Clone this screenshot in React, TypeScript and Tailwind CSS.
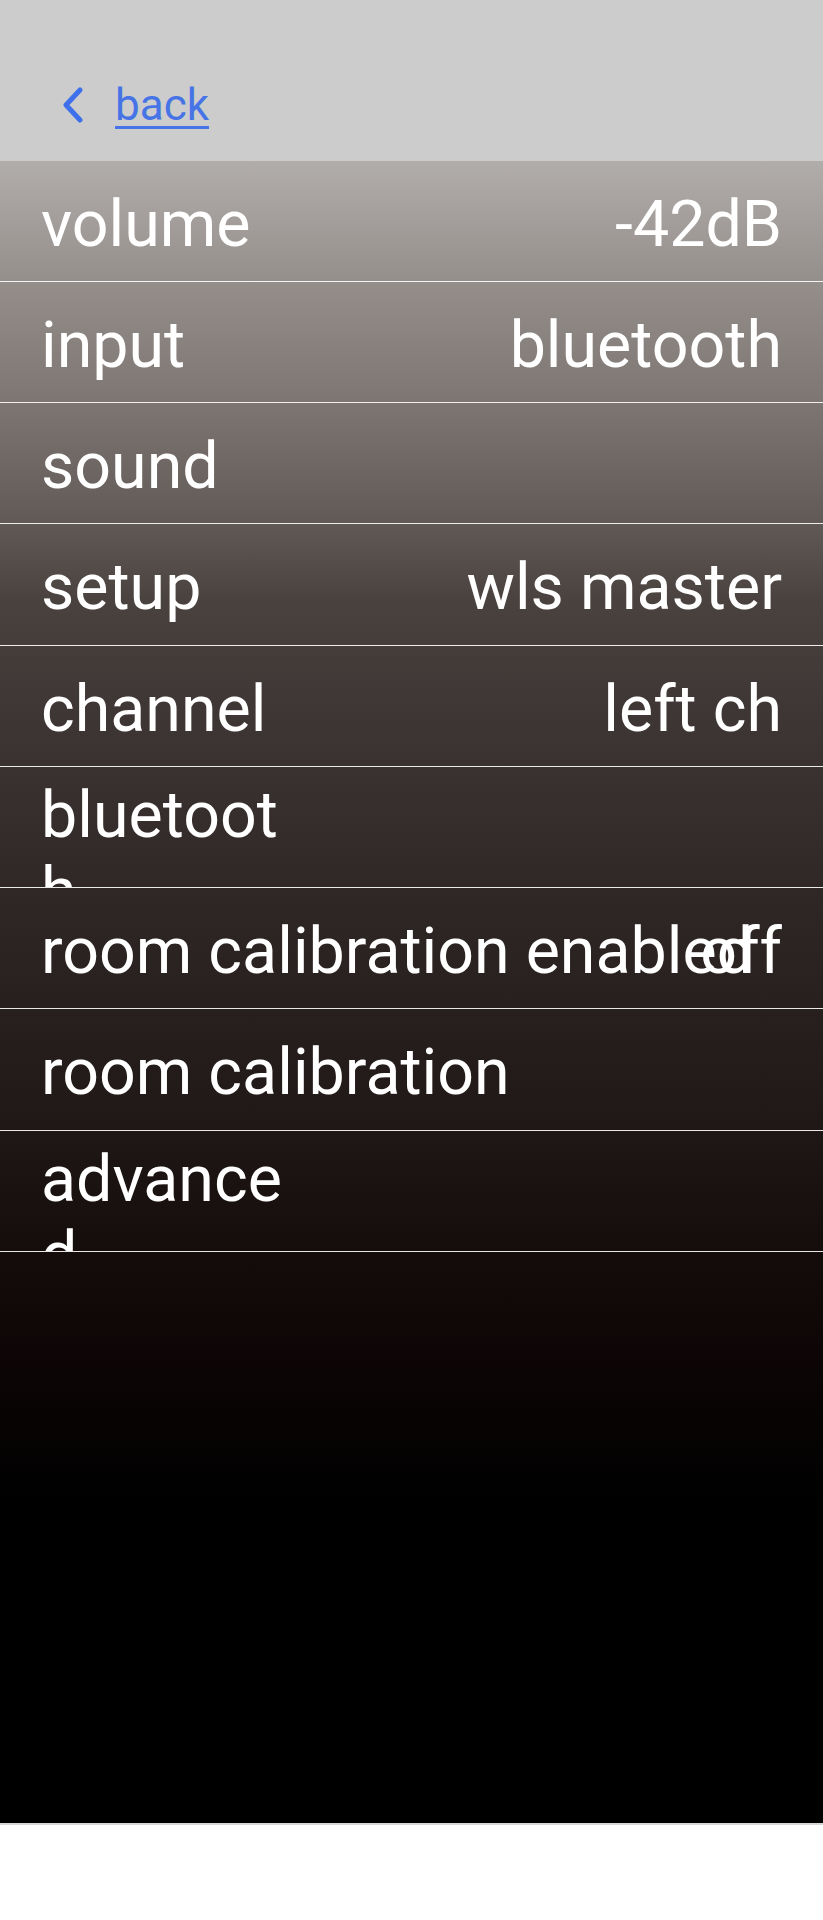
import React from 'react';

type Row = {
    label: string;
    value?: string;
    wrap?: boolean;
};

const rows: Row[] = [
    { label: 'volume', value: '-42dB' },
    { label: 'input', value: 'bluetooth' },
    { label: 'sound' },
    { label: 'setup', value: 'wls master' },
    { label: 'channel', value: 'left ch' },
    { label: 'bluetooth', wrap: true },
    { label: 'room calibration enabled', value: 'off' },
    { label: 'room calibration' },
    { label: 'advanced', wrap: true },
];

function ChevronLeft() {
    return (
        <svg width="24" height="36" viewBox="0 0 24 36" className="shrink-0 mt-[8px]">
            <polyline
                points="19,3 5,18 19,33"
                fill="none"
                stroke="#3f70ec"
                strokeWidth="5"
                strokeLinecap="round"
                strokeLinejoin="round"
            />
        </svg>
    );
}

function MenuRow({ row }: { row: Row }) {
    return (
        <div
            className={`h-[121.25px] overflow-hidden border-b border-white/90 px-[41px] ${row.wrap ? 'pt-[10px]' : 'pt-[25px]'}`}
        >
            {/* label and value share one cell so a long label runs under the value */}
            <div className="grid text-[64.5px] leading-[76px] text-white">
                <span
                    className={`col-start-1 row-start-1 justify-self-start ${row.wrap ? 'w-[260px] break-all' : 'whitespace-nowrap'}`}
                >
                    {row.label}
                </span>
                {row.value && (
                    <span className="col-start-1 row-start-1 justify-self-end whitespace-nowrap">
                        {row.value}
                    </span>
                )}
            </div>
        </div>
    );
}

export default function App() {
    return (
        <div className="w-[823px] bg-white font-['Roboto','Noto_Sans',sans-serif]">
            <div className="flex h-[1825px] flex-col border-b-2 border-[#d6d6d6]">
                {/* Header */}
                <div className="flex h-[160.5px] shrink-0 items-start gap-[30px] bg-[#cccccc] pl-[61px] pt-[79px]">
                    <ChevronLeft />
                    <a
                        href="#"
                        className="text-[44px] leading-[52px] text-[#4674e6] underline decoration-[3px] underline-offset-[6px]"
                    >
                        back
                    </a>
                </div>

                {/* Menu list */}
                <div className="flex-1 bg-[linear-gradient(180deg,#b1adaa_0%,#958f8c_7.2%,#7d7673_14.4%,#615a56_21.6%,#4a423f_26.4%,#403836_32.1%,#2f2725_44.4%,#221a18_56.4%,#150d0b_65.5%,#0e0606_71.5%,#000000_80.5%)]">
                    {rows.map((row) => (
                        <MenuRow key={row.label} row={row} />
                    ))}
                </div>
            </div>
        </div>
    );
}
